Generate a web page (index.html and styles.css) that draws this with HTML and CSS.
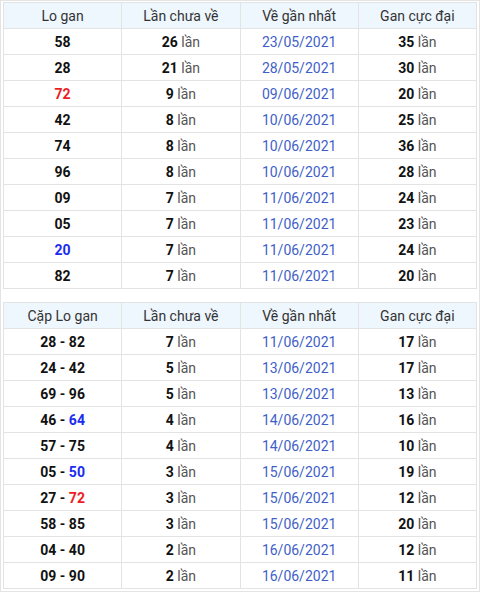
FILE: index.html
```html
<!DOCTYPE html>
<html>
<head>
<meta charset="utf-8">
<link rel="stylesheet" href="styles.css">
</head>
<body>
<div class="frame">
<table class="gan">
<thead><tr><th>Lo gan</th><th>Lần chưa về</th><th>Về gần nhất</th><th>Gan cực đại</th></tr></thead>
<tbody>
<tr><td class="num">58</td><td><b>26</b> lần</td><td class="date">23/05/2021</td><td><b>35</b> lần</td></tr>
<tr><td class="num">28</td><td><b>21</b> lần</td><td class="date">28/05/2021</td><td><b>30</b> lần</td></tr>
<tr><td class="num red">72</td><td><b>9</b> lần</td><td class="date">09/06/2021</td><td><b>20</b> lần</td></tr>
<tr><td class="num">42</td><td><b>8</b> lần</td><td class="date">10/06/2021</td><td><b>25</b> lần</td></tr>
<tr><td class="num">74</td><td><b>8</b> lần</td><td class="date">10/06/2021</td><td><b>36</b> lần</td></tr>
<tr><td class="num">96</td><td><b>8</b> lần</td><td class="date">10/06/2021</td><td><b>28</b> lần</td></tr>
<tr><td class="num">09</td><td><b>7</b> lần</td><td class="date">11/06/2021</td><td><b>24</b> lần</td></tr>
<tr><td class="num">05</td><td><b>7</b> lần</td><td class="date">11/06/2021</td><td><b>23</b> lần</td></tr>
<tr><td class="num blue">20</td><td><b>7</b> lần</td><td class="date">11/06/2021</td><td><b>24</b> lần</td></tr>
<tr><td class="num">82</td><td><b>7</b> lần</td><td class="date">11/06/2021</td><td><b>20</b> lần</td></tr>
</tbody>
</table>
<table class="gan second">
<thead><tr><th>Cặp Lo gan</th><th>Lần chưa về</th><th>Về gần nhất</th><th>Gan cực đại</th></tr></thead>
<tbody>
<tr><td class="num">28 - 82</td><td><b>7</b> lần</td><td class="date">11/06/2021</td><td><b>17</b> lần</td></tr>
<tr><td class="num">24 - 42</td><td><b>5</b> lần</td><td class="date">13/06/2021</td><td><b>17</b> lần</td></tr>
<tr><td class="num">69 - 96</td><td><b>5</b> lần</td><td class="date">13/06/2021</td><td><b>13</b> lần</td></tr>
<tr><td class="num">46 - <span class="blue">64</span></td><td><b>4</b> lần</td><td class="date">14/06/2021</td><td><b>16</b> lần</td></tr>
<tr><td class="num">57 - 75</td><td><b>4</b> lần</td><td class="date">14/06/2021</td><td><b>10</b> lần</td></tr>
<tr><td class="num">05 - <span class="blue">50</span></td><td><b>3</b> lần</td><td class="date">15/06/2021</td><td><b>19</b> lần</td></tr>
<tr><td class="num">27 - <span class="red">72</span></td><td><b>3</b> lần</td><td class="date">15/06/2021</td><td><b>12</b> lần</td></tr>
<tr><td class="num">58 - 85</td><td><b>3</b> lần</td><td class="date">15/06/2021</td><td><b>20</b> lần</td></tr>
<tr><td class="num">04 - 40</td><td><b>2</b> lần</td><td class="date">16/06/2021</td><td><b>12</b> lần</td></tr>
<tr><td class="num">09 - 90</td><td><b>2</b> lần</td><td class="date">16/06/2021</td><td><b>11</b> lần</td></tr>
</tbody>
</table>
</div>
</body>
</html>
```
FILE: styles.css
```css
html, body {
  margin: 0;
  padding: 0;
  background: #fff;
}
body {
  font-family: Roboto, "Noto Sans", Arial, sans-serif;
  font-size: 14px;
  color: #222;
}
.frame {
  width: 480px;
  height: 592px;
  box-sizing: border-box;
  border: 1px solid #e4e4e4;
  padding: 1px 2px;
}
.gan {
  width: 100%;
  border-collapse: collapse;
  table-layout: fixed;
}
.gan.second {
  margin-top: 13px;
}
.gan th, .gan td {
  border: 1px solid #e3e3e3;
  height: 25px;
  padding: 0;
  text-align: center;
  vertical-align: middle;
}
.gan th {
  background: #eef6fe;
  font-weight: 400;
  color: #333;
}
.gan td {
  color: #555;
}
.gan td b {
  color: #111;
  font-weight: 700;
}
.gan td.num {
  font-weight: 700;
  color: #111;
}
.gan td.date {
  color: #3f5fc8;
}
.red {
  color: #ee1c25 !important;
}
.blue {
  color: #1a2cf0 !important;
}
```
